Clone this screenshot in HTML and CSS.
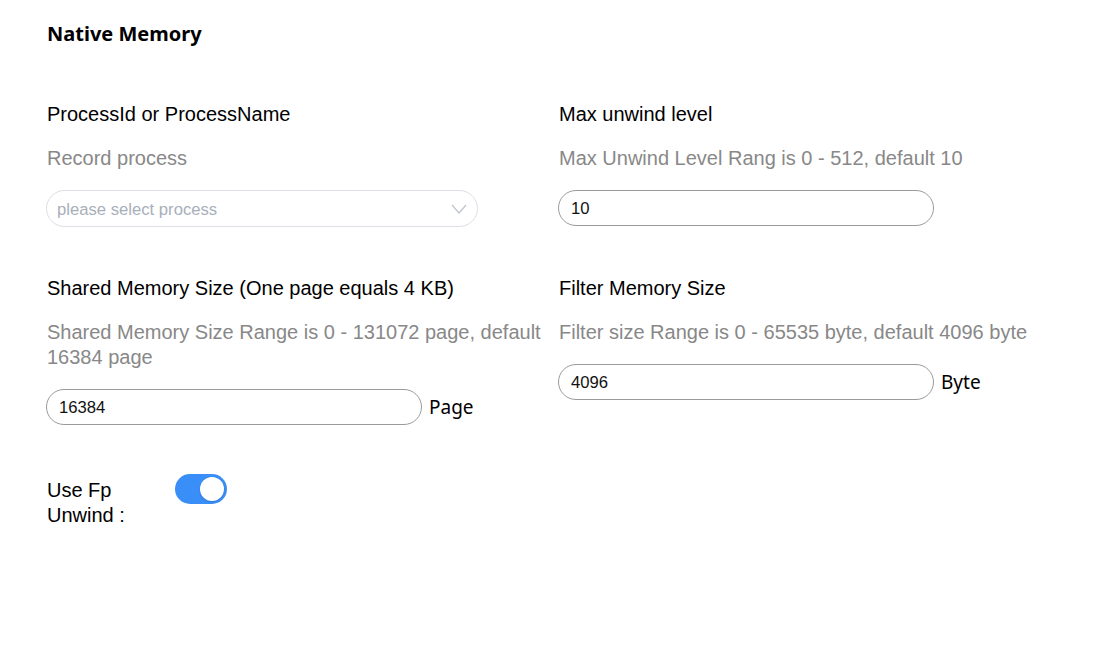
FILE: index.html
```html
<!DOCTYPE html>
<html lang="en">
<head>
<meta charset="utf-8">
<title>Native Memory</title>
<link rel="stylesheet" href="styles.css">
</head>
<body>
<div class="page">
  <h1 class="title">Native Memory</h1>
  <div class="grid">
    <div class="field">
      <div class="label">ProcessId or ProcessName</div>
      <div class="desc">Record process</div>
      <div class="control-row">
        <div class="select">
          <span class="placeholder">please select process</span>
          <svg class="chevron" width="16" height="10" viewBox="0 0 16 10"><polyline points="1,1 8,9 15,1" fill="none" stroke="#c0c4cc" stroke-width="1.2"/></svg>
        </div>
      </div>
    </div>
    <div class="field">
      <div class="label">Max unwind level</div>
      <div class="desc">Max Unwind Level Rang is 0 - 512, default 10</div>
      <div class="control-row">
        <input class="input" type="text" value="10">
      </div>
    </div>
    <div class="field">
      <div class="label">Shared Memory Size (One page equals 4 KB)</div>
      <div class="desc">Shared Memory Size Range is 0 - 131072 page, default 16384 page</div>
      <div class="control-row">
        <input class="input" type="text" value="16384">
        <span class="unit">Page</span>
      </div>
    </div>
    <div class="field">
      <div class="label">Filter Memory Size</div>
      <div class="desc">Filter size Range is 0 - 65535 byte, default 4096 byte</div>
      <div class="control-row">
        <input class="input" type="text" value="4096">
        <span class="unit">Byte</span>
      </div>
    </div>
  </div>
  <div class="switch-row">
    <div class="switch-label">Use Fp Unwind :</div>
    <div class="switch"><span class="knob"></span></div>
  </div>
</div>
</body>
</html>
```

FILE: styles.css
```css
html, body {
  margin: 0;
  padding: 0;
  background: #fff;
}
body {
  font-family: "Liberation Sans", Arial, sans-serif;
  color: #000;
}
.page {
  padding: 20px 0 0 47px;
}
.title {
  margin: 0;
  font-family: "Noto Sans", "Open Sans", sans-serif;
  font-weight: 700;
  font-size: 20px;
  line-height: 28px;
}
.grid {
  margin-top: 54px;
  display: grid;
  grid-template-columns: 500px 500px;
  column-gap: 12px;
  row-gap: 49px;
}
.field {
  display: flex;
  flex-direction: column;
  align-items: flex-start;
}
.label {
  font-size: 20px;
  line-height: 25px;
  color: #000;
}
.desc {
  margin-top: 19px;
  font-size: 20px;
  line-height: 25px;
  color: #888;
}
.control-row {
  margin-top: 19px;
  display: flex;
  align-items: center;
}
.select {
  box-sizing: border-box;
  width: 432px;
  height: 37px;
  margin-left: -1px;
  border: 1px solid #dcdfe6;
  border-radius: 19px;
  display: flex;
  align-items: center;
  justify-content: space-between;
  padding: 0 10px 0 10px;
}
.placeholder {
  font-size: 16.67px;
  color: #a8afba;
  padding-top: 2px;
}
.chevron {
  display: block;
  margin-top: 1px;
}
.input {
  box-sizing: border-box;
  width: 376px;
  height: 36px;
  margin: 0 0 0 -1px;
  border: 1px solid #9a9a9a;
  border-radius: 18px;
  padding: 2px 12px 0 12px;
  font-family: "Liberation Sans", Arial, sans-serif;
  font-size: 16.67px;
  color: #111;
  outline: none;
  background: #fff;
}
.unit {
  margin-left: 7px;
  font-family: "Noto Sans", "Open Sans", sans-serif;
  font-size: 19px;
  color: #000;
  line-height: 25px;
}
.switch-row {
  margin-top: 49px;
  display: flex;
  align-items: flex-start;
}
.switch-label {
  width: 128px;
  padding-top: 4px;
  font-size: 20px;
  line-height: 25px;
}
.switch {
  position: relative;
  width: 52px;
  height: 30px;
  border-radius: 15px;
  background: #3a8ef7;
}
.knob {
  position: absolute;
  top: 3px;
  right: 3px;
  width: 24px;
  height: 24px;
  border-radius: 50%;
  background: #fff;
  box-shadow: 0 1px 2px rgba(0,0,0,0.15);
}
```
